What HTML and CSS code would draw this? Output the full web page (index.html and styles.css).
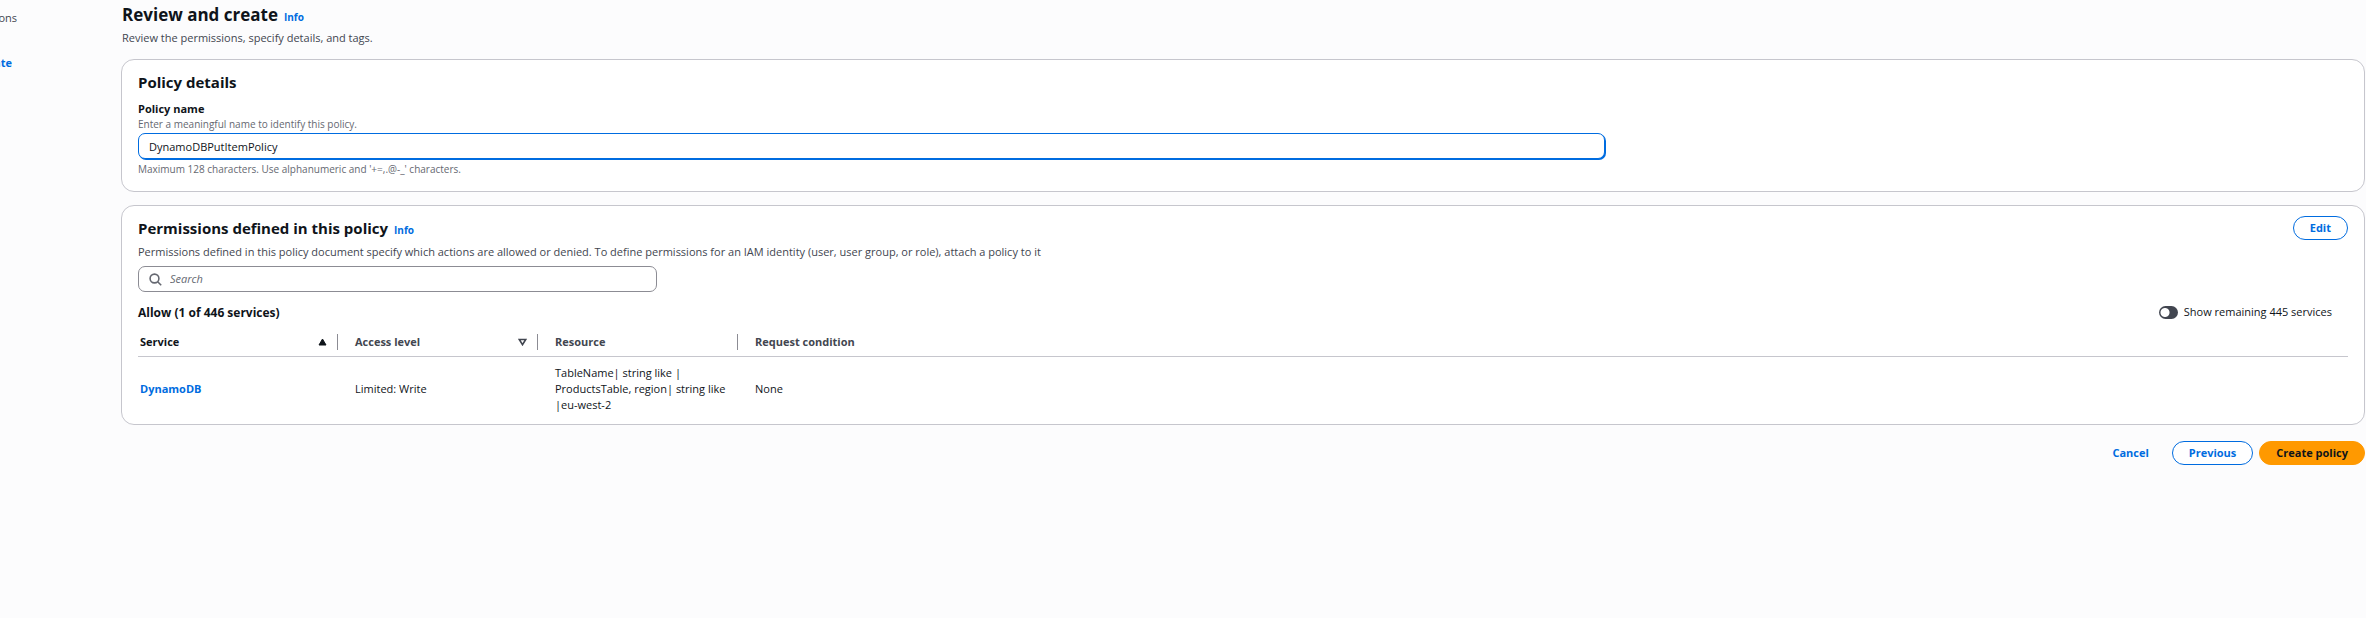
FILE: index.html
```html
<!DOCTYPE html>
<html lang="en">
<head>
<meta charset="utf-8">
<title>Review and create</title>
<link rel="stylesheet" href="styles.css">
</head>
<body>
<div class="layout">
  <nav class="steps">
    <span class="step">ons</span>
    <a class="step step-current" href="#">ate</a>
  </nav>
  <main class="content">
    <header class="page-header">
      <div class="title-row"><h1>Review and create</h1><a class="info" href="#">Info</a></div>
      <p class="description">Review the permissions, specify details, and tags.</p>
    </header>

    <section class="card details">
      <h2>Policy details</h2>
      <label class="field-label" for="policy-name">Policy name</label>
      <p class="hint">Enter a meaningful name to identify this policy.</p>
      <input class="name-input" id="policy-name" type="text" value="DynamoDBPutItemPolicy">
      <p class="hint">Maximum 128 characters. Use alphanumeric and '+=,.@-_' characters.</p>
    </section>

    <section class="card permissions">
      <div class="card-header">
        <div class="title-row"><h2>Permissions defined in this policy</h2><a class="info" href="#">Info</a></div>
        <button class="button" type="button">Edit</button>
      </div>
      <p class="description">Permissions defined in this policy document specify which actions are allowed or denied. To define permissions for an IAM identity (user, user group, or role), attach a policy to it</p>
      <div class="search">
        <svg class="search-icon" viewBox="0 0 13 13" aria-hidden="true"><circle cx="5.5" cy="5.5" r="4.4"/><path d="M8.7 8.7 12.2 12.2"/></svg>
        <input class="search-input" type="search" placeholder="Search" aria-label="Search">
      </div>
      <div class="allow-row">
        <h3>Allow (1 of 446 services)</h3>
        <label class="toggle"><input class="toggle-input" type="checkbox" role="switch">Show remaining 445 services</label>
      </div>
      <table class="services">
        <thead>
          <tr>
            <th class="col sorted"><div class="head"><span>Service</span><svg class="sort" viewBox="0 0 9 8" aria-hidden="true"><path class="solid" d="M4.5 1 8 7H1z"/></svg></div></th>
            <th class="col"><div class="head"><span>Access level</span><svg class="sort" viewBox="0 0 9 8" aria-hidden="true"><path d="M1.3 1.5h6.4L4.5 6.7z"/></svg></div></th>
            <th class="col"><div class="head"><span>Resource</span></div></th>
            <th><div class="head"><span>Request condition</span></div></th>
          </tr>
        </thead>
        <tbody>
          <tr>
            <td><a class="service-link" href="#">DynamoDB</a></td>
            <td>Limited: Write</td>
            <td>TableName| string like |<br>ProductsTable, region| string like<br>|eu-west-2</td>
            <td>None</td>
          </tr>
        </tbody>
      </table>
    </section>

    <footer class="actions">
      <button class="button button-link" type="button">Cancel</button>
      <button class="button" type="button">Previous</button>
      <button class="button button-primary" type="button">Create policy</button>
    </footer>
  </main>
</div>
</body>
</html>
```

FILE: styles.css
```css
* { box-sizing: border-box; }

body {
  margin: 0;
  background: #fcfcfd;
  color: #0f141a;
  font: 11px/16px "Open Sans", "Noto Sans", sans-serif;
}

h1, h2, h3, p { margin: 0; }
a { color: #006ce0; text-decoration: none; }

.layout { display: flex; min-height: 100vh; }

.steps {
  flex: 0 0 121px;
  min-width: 0;
  display: flex;
  flex-direction: column;
  gap: 29px;
  padding: 10px 104px 0 0;
  color: #424650;
}
.step { display: flex; justify-content: flex-end; overflow: hidden; }
.step-current { padding-right: 5px; color: #006ce0; font-weight: 700; }

.content { flex: 1; min-width: 0; padding-right: 1px; }

.page-header { padding: 3px 1px 13px; }
.title-row { display: flex; align-items: baseline; gap: 6px; }
h1 { font-size: 17px; line-height: 24px; }
h2 { font-size: 15px; line-height: 20px; }
h3 { font-size: 12px; line-height: 16px; }
.info { font-size: 10px; font-weight: 700; }
.description { color: #424650; }
.page-header .description { margin-top: 3px; }

.card {
  background: #fff;
  border: 1px solid #c6c6cd;
  border-radius: 13px;
  padding: 12px 16px;
}
.details { padding-bottom: 15px; margin-bottom: 13px; }
.field-label { display: block; margin-top: 9px; font-weight: 700; }
.hint { color: #656871; font-size: 10px; line-height: 14px; }

.name-input {
  display: block;
  width: 66.4%;
  height: 26px;
  margin: 2px 0 3px;
  padding: 0 10px;
  border: 1px solid #006ce0;
  border-radius: 7px;
  box-shadow: 1px 1px 0 #006ce0;
  background: #fff;
  color: inherit;
  font: inherit;
  outline: none;
}

.permissions { padding: 10px 16px 8px; }
.card-header { display: flex; justify-content: space-between; }
.card-header .title-row { padding-top: 2px; }
.card-header + .description { margin-top: 4px; }

.button {
  height: 24px;
  padding: 0 16px;
  border: 1px solid #006ce0;
  border-radius: 12px;
  background: #fff;
  color: #006ce0;
  font: inherit;
  font-weight: 700;
}
.button-link { border-color: transparent; background: transparent; }
.button-primary { border-color: #ff9900; background: #ff9900; color: #0f141a; }

.search {
  display: flex;
  align-items: center;
  gap: 8px;
  max-width: 519px;
  height: 26px;
  margin-top: 6px;
  padding: 0 10px;
  border: 1px solid #8c8c94;
  border-radius: 7px;
}
.search-icon { width: 13px; height: 13px; fill: none; stroke: #656871; stroke-width: 1.6; }
.search-input { flex: 1; border: 0; padding: 0; background: none; font: inherit; outline: none; }
.search-input::placeholder { color: #656871; font-style: italic; opacity: 1; }

.allow-row { display: flex; align-items: flex-end; justify-content: space-between; margin-top: 12px; padding-right: 16px; }
.toggle { display: flex; align-items: center; gap: 6px; padding-bottom: 1px; }
.toggle-input {
  appearance: none;
  width: 19px;
  height: 13px;
  margin: 0;
  border-radius: 7px;
  background: radial-gradient(circle at 6px 50%, #fff 4px, #424650 5px);
}

.services { width: 100%; margin-top: 5px; border-collapse: collapse; table-layout: fixed; }
.col { width: 200px; }
.services th { padding: 8px 0 6px; border-bottom: 1px solid #c6c6cd; color: #424650; text-align: left; }
.services .sorted { color: #0f141a; }
.services td { padding: 8px 0 3px 17px; }
.services td:first-child { padding-left: 2px; }
.head { display: flex; align-items: center; justify-content: space-between; padding: 0 10px 0 17px; }
.sorted .head { padding-left: 2px; }
.col .head { border-right: 1px solid #8c8c94; }
.sort { width: 9px; height: 8px; fill: none; stroke: currentColor; stroke-width: 1.6; }
.sort .solid { fill: currentColor; stroke-width: 1; }
.service-link { font-weight: 700; }

.actions { display: flex; justify-content: flex-end; gap: 6px; margin-top: 16px; }
```
